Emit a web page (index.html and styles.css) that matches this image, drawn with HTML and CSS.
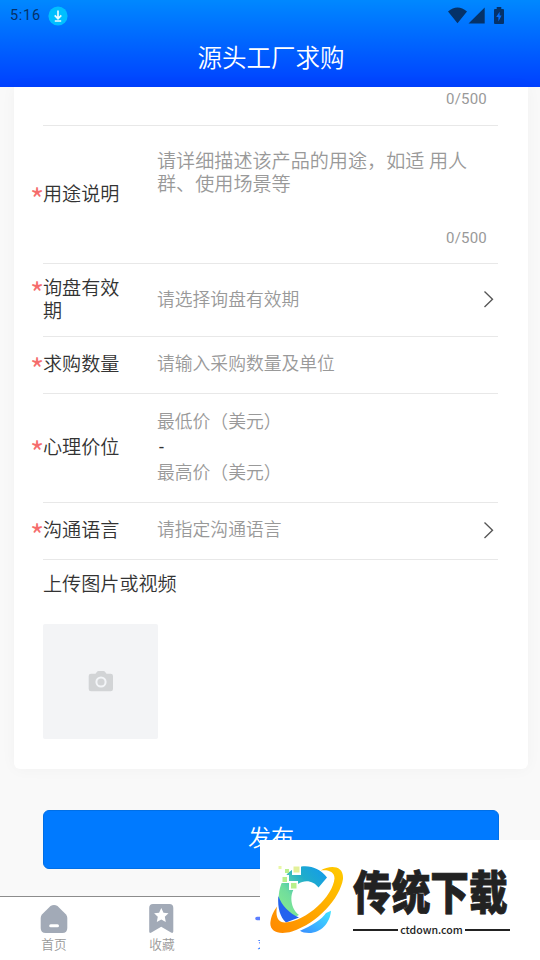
FILE: index.html
```html
<!DOCTYPE html>
<html lang="zh-CN">
<head>
<meta charset="utf-8">
<title>源头工厂求购</title>
<link rel="stylesheet" href="styles.css">
</head>
<body>
<div class="screen">
  <header class="header">
    <div class="status">
      <span class="clock">5:16</span>
      <svg class="download" width="20" height="20" viewBox="0 0 20 20"><circle cx="10" cy="10" r="9.6" fill="#00bfff"/><path d="M10 4.500v8M6.700 9.300l3.300 3.400 3.300-3.400M6.800 15h6.400" fill="none" stroke="#e9faff" stroke-width="1.700"/></svg>
      <svg class="signals" width="58" height="18" viewBox="0 0 58 18" fill="#053269"><path d="M0 4.500Q9.500-3.500 19 4.500L9.500 16.300zM20.500 16.500L36.700.5v16zM46 3Q46 2 47 2H48.700V0h4.600V2H55Q56 2 56 3V16Q56 17 55 17H47Q46 17 46 16z"/><path d="M51.600 4.800v3.800H53.600l-3.200 6V10h-2.200z" fill="#006dff"/></svg>
    </div>
    <h1 class="title">源头工厂求购</h1>
  </header>
  <main class="content">
    <section class="card">
      <div class="row row-tail"><span class="counter">0/500</span></div>
      <div class="row row-usage">
        <label class="label"><i class="star">*</i>用途说明</label>
        <div class="area"><p class="hint">请详细描述该产品的用途，如适 用人<br>群、使用场景等</p><span class="counter">0/500</span></div>
      </div>
      <div class="row row-validity">
        <label class="label"><i class="star">*</i>询盘有效期</label>
        <span class="input">请选择询盘有效期</span>
        <svg class="chevron" width="12" height="18" viewBox="0 0 12 18"><path d="M1.500 1.500L9.500 9.200L1.500 17" fill="none" stroke="#555" stroke-width="1.350"/></svg>
      </div>
      <div class="row row-single">
        <label class="label"><i class="star">*</i>求购数量</label>
        <span class="input raised">请输入采购数量及单位</span>
      </div>
      <div class="row row-price">
        <label class="label"><i class="star">*</i>心理价位</label>
        <div class="range"><span class="input">最低价（美元）</span><span class="dash">-</span><span class="input">最高价（美元）</span></div>
      </div>
      <div class="row row-single">
        <label class="label"><i class="star">*</i>沟通语言</label>
        <span class="input raised">请指定沟通语言</span>
        <svg class="chevron" width="12" height="18" viewBox="0 0 12 18"><path d="M1.500 1.500L9.500 9.200L1.500 17" fill="none" stroke="#555" stroke-width="1.350"/></svg>
      </div>
      <h2 class="upload-title">上传图片或视频</h2>
      <div class="upload">
        <svg width="26" height="22" viewBox="0 0 26 22"><path d="M3 3.800H7.500L9.200 1.600Q9.700 1 10.500 1H15.500Q16.300 1 16.800 1.600L18.500 3.800H22.700Q25 3.800 25 6V19Q25 21.300 22.700 21.300H3Q.7 21.300.7 19V6Q.7 3.800 3 3.800z" fill="#d2d4d6"/><circle cx="13" cy="12" r="4.600" fill="none" stroke="#f3f5f8" stroke-width="2"/></svg>
      </div>
    </section>
    <button class="submit">发布</button>
  </main>
  <nav class="tabs">
    <div class="tab">
      <svg width="28" height="30" viewBox="0 0 28 30"><path d="M10.500 2Q14 0 17.500 2L25.800 10.300Q27.300 12 27.300 14V24Q27.300 29 22.300 29H5.700Q.7 29 .7 24V14Q.7 12 2.200 10.300z" fill="#a2aab7"/><rect x="9.200" y="20.300" width="9.800" height="3" rx="1.500" fill="#fff"/></svg>
      <span>首页</span>
    </div>
    <div class="tab">
      <svg width="28" height="30" viewBox="0 0 28 30"><path d="M5 0H21.500Q25.300 0 25.300 4V27.500Q25 29.700 23 28.600L13.200 22.800L3.400 28.600Q1.200 29.700 1.200 27.500V4Q1.200 0 5 0z" fill="#a2aab7"/><path d="M13.300 4l2.200 4.700 5 .6-3.700 3.500 1 5.100-4.500-2.500-4.500 2.500 1-5.100-3.700-3.500 5-.6z" fill="#fff"/></svg>
      <span>收藏</span>
    </div>
    <div class="tab active">
      <svg width="30" height="30" viewBox="0 0 30 30"><path d="M2 14.500H28M15 2V28" stroke="#5c7fff" stroke-width="3.600" stroke-linecap="round"/></svg>
      <span>求购</span>
    </div>
    <div class="tab"></div>
    <div class="tab"></div>
  </nav>
  <aside class="watermark">
    <svg class="mark" width="80" height="76" viewBox="0 0 80 76">
      <defs>
        <linearGradient id="arc" x1="0" y1="1" x2="1" y2="0"><stop offset="0" stop-color="#8df08a"/><stop offset=".35" stop-color="#70dd9d"/><stop offset=".65" stop-color="#20adca"/><stop offset="1" stop-color="#1198f0"/></linearGradient>
        <linearGradient id="ring" x1="0" y1="1" x2="1" y2="0"><stop offset="0" stop-color="#ff8800"/><stop offset="1" stop-color="#ffcb00"/></linearGradient>
        <linearGradient id="tail" x1="0" y1="1" x2="1" y2="0"><stop offset="0" stop-color="#398dff"/><stop offset="1" stop-color="#40e5ff"/></linearGradient>
      </defs>
      <path d="M57 11.500C48-1 30-4 18 7C7 18 5 42 16 55L29 49C19 41 19 25 28 18C35 13 44 15 48.500 21.500z" fill="url(#arc)"/>
      <path d="M8.300 30C7.500 42 10 51 16 56.500L29 51.500C19 47 12 40 8.300 30z" fill="#2463ee"/>
      <path d="M30 64.700C42 60 52 53 56 47L61 44.700C60 57 51 67 39 67C35 67 32 66 30 64.700z" fill="url(#tail)"/>
      <path d="M50.500 4.500C60-1 74-1 73 13C70 32 48 57 22 65.500C8 69.500-1 65 .5 55.500C1.500 49 4 45 7 40.500C5.500 49 7 56.500 15 56.500C37 55 63 30 64.500 12.500C64.500 6 59 3.500 50.500 4.500z" fill="url(#ring)"/>
      <path d="M22 0h9v9h-9zM11 9h8v8h-8zM19 15h9v9h-9z" fill="#fff"/>
      <path d="M23.500.5h6v6h-6z" fill="#e3f099"/><path d="M15 3h4v4h-4zM12.500 11h4.500v5h-4.500zM21 17h5.500v5.500H21z" fill="#b9f08c"/><path d="M8.500 0h3v3h-3z" fill="#e9f7a6"/>
    </svg>
    <div class="brand">
      <strong class="brand-name">传统下载</strong>
      <div class="brand-site"><span>ctdown.com</span></div>
    </div>
  </aside>
</div>
</body>
</html>
```
FILE: styles.css
```css
* { box-sizing: border-box; }
body { margin: 0; font-family: Roboto, "Noto Sans CJK SC", sans-serif; font-weight: 350; color: #333; }
.screen { position: relative; width: 540px; height: 960px; overflow: hidden; display: flex; flex-direction: column; background: #f9f9f9; }
.header { height: 87px; background: linear-gradient(#0088ff, #0040ff); }
.status { height: 31px; display: flex; align-items: center; padding: 0 34px 0 10px; }
.clock { font-size: 14.5px; line-height: 20px; letter-spacing: .7px; color: #053269; font-weight: 400; width: 38px; padding-top: 1px; white-space: nowrap; }
.signals { margin-left: auto; width: 58px; }
.title { margin: 10px 0 0 2px; font-size: 24.5px; line-height: 36px; font-weight: 350; text-align: center; color: #fff; }
.content { height: 809px; padding: 0 12px 0 14px; }
.card { height: 682px; padding: 0 30px 0 29px; background: #fff; border-radius: 0 0 6px 6px; box-shadow: 0 0 16px rgba(0,0,0,.035); }
.row { display: flex; align-items: center; border-bottom: 1px solid #e8e8e8; }
.row-tail { height: 39px; justify-content: flex-end; align-items: flex-start; padding: 3px 11px 0 0; }
.row-usage { height: 138px; }
.row-validity { height: 73px; }
.row-single { height: 57px; }
.row-price { height: 109px; }
.label { position: relative; width: 77px; margin-right: 37px; flex: none; font-size: 19.1px; line-height: 23px; }
.row-price .label, .row-single .label { margin-bottom: 1px; }
.star { position: absolute; left: -13px; top: 3px; color: #f56c6c; font: 350 31px/25px "Noto Sans CJK SC", sans-serif; }
.counter { font-size: 15px; line-height: 18px; letter-spacing: .2px; font-weight: 400; color: #999; }
.area { height: 100%; flex: 1; display: flex; flex-direction: column; justify-content: space-between; padding: 24px 0 16px; }
.area .counter { align-self: flex-end; margin-right: 11px; }
.hint { margin: 0; font-size: 19.1px; line-height: 23px; color: #999; white-space: nowrap; }
.input { font-size: 17.8px; line-height: 25px; color: #999; white-space: nowrap; }
.row-validity .input { margin-bottom: 1px; }
.range { margin-bottom: 2px; }
.raised { margin-bottom: 3px; }
.chevron { margin: 0 3px 3px auto; }
.range { display: flex; flex-direction: column; }
.dash { font-size: 17.8px; line-height: 26px; padding-left: 2px; font-weight: 400; }
.upload-title { margin: 10px 0 0; height: 54px; font-size: 19.1px; line-height: 30px; font-weight: 350; }
.upload { width: 115px; height: 115px; border-radius: 2px; background: #f3f4f6; display: flex; align-items: center; justify-content: center; padding-bottom: 2px; }
.submit { display: block; width: 456px; height: 59px; margin: 41px 0 0 29px; padding: 0 0 7px; border: 1px solid #006fe6; border-radius: 6px; background: #007aff; color: #fff; font: 350 23px/34px "Noto Sans CJK SC", sans-serif; }
.tabs { height: 64px; border-top: 1px solid #8c8c8c; background: #fff; display: grid; grid-template-columns: repeat(5, 108px); }
.tab { display: flex; flex-direction: column; align-items: center; padding-top: 7px; font-size: 12.7px; line-height: 18px; color: #999; }
.tab span { margin-top: 2px; }
.active { color: #007aff; }
.watermark { position: absolute; left: 260px; top: 840px; width: 280px; height: 120px; padding: 26px 0 0 10px; background: #fff; display: flex; }
.brand { width: 157px; margin-left: 3px; }
.brand-name { display: block; height: 56px; width: 190px; font: 900 46px/54px "Liberation Sans", "Noto Sans CJK SC", sans-serif; color: #222; -webkit-text-stroke: .8px #222; transform: scaleX(.84); transform-origin: left; white-space: nowrap; }
.brand-site { display: flex; align-items: center; gap: 2px; height: 16px; font: 500 10.6px/16px "Noto Sans CJK SC", sans-serif; color: #222; }
.brand-site::before, .brand-site::after { content: ""; height: 2px; flex: 1; background: #222; }
```
